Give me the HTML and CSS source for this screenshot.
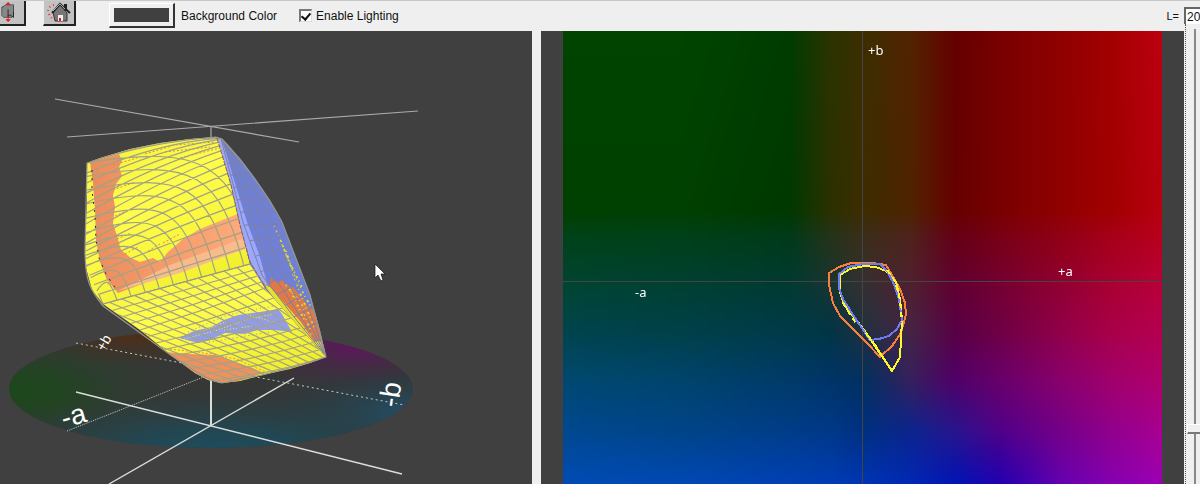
FILE: index.html
```
<!DOCTYPE html>
<html lang="en">
<head>
<meta charset="utf-8">
<title>Gamut Viewer</title>
<link rel="stylesheet" href="styles.css">
</head>
<body>
<div class="app">
  <header class="toolbar">
    <button class="tool tool-first" type="button" aria-label="Reset rotation">
      <svg width="20" height="22" viewBox="0 0 20 22"><path d="M4 5l2-2h9v12l-2 2H4l-2-2V6z" fill="#888" stroke="#555"/><path d="M2 6l2-2M15 4v10" stroke="#444"/><path d="M9 0l3 3H6zM9 22l-3-3h6z" fill="#e11"/><path d="M9 14v6" stroke="#e11"/><path d="M9 8v8l2-2 4 3v-6" fill="none" stroke="#222"/></svg>
    </button>
    <button class="tool" type="button" aria-label="Home view">
      <svg width="24" height="22" viewBox="0 0 24 22"><path d="M17 3h3v7h-3z" fill="#222"/><path d="M6 11l7-7 7 8v8H8z" fill="#777" stroke="#333"/><path d="M5 12l8-9 10 9" fill="none" stroke="#222" stroke-width="2"/><path d="M6 10l7-7 5 5" fill="none" stroke="#aaa"/><path d="M11 14h5v6h-5z" fill="#eee"/><path d="M12 17h2v3h-2z" fill="#e11"/><path d="M7 4C2 5 0 9 2 13s4 5 6 6" fill="none" stroke="#e33" stroke-width="2" stroke-dasharray="1 3"/></svg>
    </button>
    <button class="swatch" type="button" aria-labelledby="bg-label"></button>
    <span class="bg-label" id="bg-label">Background Color</span>
    <label class="lighting"><input class="tick" type="checkbox" checked>Enable Lighting</label>
    <label class="l-label" for="lvalue">L=</label>
    <input class="l-value" id="lvalue" type="text" value="20">
  </header>
  <main class="views">
    <section class="view solid-view" aria-label="3D gamut">
      <svg class="drawing" viewBox="0 31 532 453">
        <defs>
          <radialGradient id="gGreen"><stop offset="0" stop-color="#1c481c"/><stop offset=".3" stop-color="#1f451f" stop-opacity=".9"/><stop offset="1" stop-color="#2c3c2c" stop-opacity="0"/></radialGradient>
          <radialGradient id="gBrown"><stop offset="0" stop-color="#572c14"/><stop offset="1" stop-color="#42301c" stop-opacity="0"/></radialGradient>
          <radialGradient id="gPurple"><stop offset="0" stop-color="#601560"/><stop offset="1" stop-color="#402840" stop-opacity="0"/></radialGradient>
          <radialGradient id="gBlue"><stop offset="0" stop-color="#22506a"/><stop offset="1" stop-color="#223c48" stop-opacity="0"/></radialGradient>
          <radialGradient id="gTeal"><stop offset="0" stop-color="#1e4e60"/><stop offset=".4" stop-color="#204854" stop-opacity=".9"/><stop offset="1" stop-color="#2a4044" stop-opacity="0"/></radialGradient>
          <linearGradient id="gYellow" x1="0" y1="0" x2=".6" y2="1"><stop offset="0" stop-color="#f0ee38"/><stop offset=".45" stop-color="#fffd4c"/><stop offset="1" stop-color="#f0ee2c"/></linearGradient>
          <linearGradient id="gOrange" x1="0" y1="0" x2="1" y2="0"><stop offset="0" stop-color="#ec8c5c"/><stop offset="1" stop-color="#ffac7c"/></linearGradient>
          <clipPath id="disc"><ellipse cx="211" cy="389" rx="202" ry="59"/></clipPath>
          <clipPath id="topFace"><path d="M87 163L100 158 130 149 160 143 190 139 216 137 219 139 231 185 240 225 250 264 103 304 92 290 85 264 85 240 87 200z"/></clipPath>
          <clipPath id="lowFace"><path d="M103 304L250 264 265 288 300 328 326 357 310 363 290 369 262 375 240 381 222 383 208 380 195 373 172 356 140 330z"/></clipPath>
          <clipPath id="sideFace"><path d="M218 138L222 139 240 158 255 178 270 200 282 222 296 258 310 295 320 330 326 357 300 328 265 288 250 264 240 225 231 185z"/></clipPath>
        </defs>

        <g clip-path="url(#disc)">
          <rect x="9" y="330" width="404" height="118" fill="#353837"/>
          <ellipse cx="18" cy="390" rx="150" ry="62" fill="url(#gGreen)"/>
          <ellipse cx="135" cy="330" rx="120" ry="38" fill="url(#gBrown)"/>
          <ellipse cx="355" cy="345" rx="130" ry="46" fill="url(#gPurple)"/>
          <ellipse cx="410" cy="415" rx="150" ry="50" fill="url(#gBlue)"/>
          <ellipse cx="220" cy="454" rx="240" ry="64" fill="url(#gTeal)"/>
        </g>
        <g class="dotted"><path d="M76 343L404 405" stroke-dasharray="2 3"/><path d="M67 431L292 342" stroke-dasharray="1 1"/></g>
        <g class="disc-text">
          <text x="64" y="428" font-size="28" transform="rotate(-16 64 428)">-a</text>
          <text x="398" y="408" font-size="28" transform="rotate(-82 398 408)">-b</text>
          <text x="104" y="352" font-size="14" transform="rotate(-60 104 352)">+b</text>
        </g>
        <g class="axes far"><path d="M55 99L299 142M67 137L418 111"/><path d="M211 126V140"/></g>
        <g class="axes"><path d="M76 392L402 474M109 484L294 378"/><path d="M211 380V426" stroke-width="2"/></g>

        <g clip-path="url(#topFace)">
          <rect x="80" y="130" width="180" height="180" fill="url(#gYellow)"/>
          <path fill="url(#gOrange)" d="M90 162L119 154 122 161 119 167 122 176 116 184 113 195 115 207 113 223 117 236 121 250 131 258 140 262 153 258 160 262 168 252 183 239 200 229 220 221 240 213 250 244 118 293 107 280 100 262 96 240 95 210 93 184z"/>
          <path fill="#f8bc8c" d="M118 291L170 265 244 238 250 247 180 273z"/>
          <g class="flecks"><path d="M113 165l24-7M113 190l22-8M115 216l18-8M117 239l14-6M145 154l30-9 40-3M165 152l45-5M180 158l40-10M125 254l13-7M148 251l12-7M163 243l17-9"/></g>
          <g class="grid" id="topGrid"></g>
          <path d="M92 170V190L95 216 96 240 99 258 106 274 118 292" fill="none" stroke="#28282c" stroke-dasharray="2 6"/>
        </g>
        <g clip-path="url(#lowFace)">
          <rect x="95" y="260" width="235" height="125" fill="url(#gYellow)"/>
          <path fill="#929ce8" d="M179 338L194 331 211 327 224 320 238 315 260 312 278 309 282 314 292 332 275 330 258 330 245 334 225 333 210 340 198 343z"/>
          <path fill="none" stroke="#f6f436" stroke-dasharray="1 2" d="M184 339L218 330 250 318 276 314M195 334L228 321M224 330L252 326M247 315L275 322"/>
          <path fill="none" stroke="#8590e0" stroke-dasharray="1 3" d="M188 332L225 316 245 311 275 306M205 343L240 337 270 332"/>
          <path fill="#f0905c" d="M165 352L190 354 215 355 232 361 250 367 264 373 222 386 200 382z"/>
          <path fill="none" stroke="#ec8c50" stroke-dasharray="2 2" d="M170 349L212 354 236 359 268 373"/>
          <g class="grid" id="lowGrid"></g>
        </g>
        <g clip-path="url(#sideFace)">
          <rect x="215" y="135" width="115" height="225" fill="#7080d4"/>
          <path fill="#9ca8fc" d="M218 138L222 139 234 180 247 222 259 254 268 286 260 282 248 257 238 222z"/>
          <path fill="#e07848" d="M255 265L269 287 271 278 278 283 282 280 287 286 293 287 300 296 308 306 316 312 326 357 295 325z"/>
          <path fill="#e4e22c" d="M264 285L270 287 300 321 314 341 326 342V360L300 332z"/>
          <path fill="none" stroke="#e0e030" stroke-width="2" stroke-dasharray="1 4 2 3" d="M274 226L288 259 302 288M281 241L295 279 311 307M286 251L300 293 315 329M286 285L301 303 312 336M291 291L305 322"/>
          <g class="grid" id="sideGrid"></g>
        </g>
        <path class="outline" d="M87 163Q145 143 216 137L222 139C240 158 267 193 282 222L310 295 326 357Q310 363 262 375L222 383Q208 381 172 356L103 306C90 290 85 280 85 250L87 163M103 304L250 264"/>
        <path fill="none" stroke="#8c5c50" d="M217 138L231 185 240 225 250 262 266 288" stroke-dasharray="5 1"/>
        <path d="M375 264v14l3-3 3 6 2-1-2-6h4z" fill="#fff" stroke="#111" stroke-width=".7"/>
      </svg>
    </section>
    <section class="view plane-view" aria-label="a-b plane">
      <canvas class="field" id="field" width="599" height="453"></canvas>
      <svg class="drawing" viewBox="563 31 599 453">
        <g fill="none" shape-rendering="crispEdges">
          <path stroke="#444" d="M862.500 31V484M563 281.500H1162"/>
          <g stroke-width="2">
            <path stroke="#f8803c" d="M829 273L839 267 851 263H872L886 265 892 275 900 289 905 303 906 314 901 333 892 346 880 357 867 343 840 316 833 303 829 285z"/>
            <path stroke="#fcf82c" d="M840 275L850 269 864 266 876 267 886 271 896 282 900 299 902 320 900 357 892 371 875 345 858 322 844 305 840 292z"/>
            <path stroke="#6c7cf0" d="M839 274L848 267 863 264H880L887 271 893 282 899 299 902 320 897 329 889 336 879 339 870 340 857 321 843 299 839 288z"/>
            <path stroke="#fcf82c" stroke-dasharray="5 4" d="M887 270L895 281 900 300 902 322M843 303L857 325"/>
            <path stroke="#fcf82c" d="M866 333L892 371"/>
          </g>
        </g>
        <g class="plane-text"><text x="868" y="55">+b</text><text x="1058" y="276">+a</text><text x="635" y="297">-a</text></g>
      </svg>
    </section>
    <aside class="slider-pane">
      <input class="slider" type="range" min="10" max="100" value="20" aria-label="Lightness">
    </aside>
  </main>
</div>
<script src="view.js"></script>
</body>
</html>
```
FILE: styles.css
```
* { box-sizing: border-box; }
body { margin: 0; background: #efefef; font: 12px/16px "Liberation Sans", Arial, sans-serif; color: #111; }
.app { display: flex; flex-direction: column; height: 100vh; overflow: hidden; }
.toolbar { display: flex; align-items: flex-start; height: 31px; flex: none; border-top: 1px solid #c8c8c8; }
.tool { width: 33px; height: 25px; flex: none; margin: 0 17px 0 0; padding: 0 0 2px; display: flex; align-items: center; justify-content: center; background: #c2c2c2; border: solid; border-width: 0 2px 2px 1px; border-color: #fff #222 #222 #eee; border-radius: 0; }
.tool-first { width: 26px; padding-right: 6px; border-left: 0; }
.swatch { width: 66px; height: 25px; flex: none; margin: 2px 0 0 16px; padding: 4px; border: solid; border-width: 1px 2px 2px 1px; border-color: #fff #333 #333 #fff; border-radius: 0; background: #404040 content-box; }
.bg-label { margin: 7px 0 0 6px; white-space: nowrap; }
.lighting { display: flex; gap: 4px; margin: 7px auto 0 22px; white-space: nowrap; }
.tick { appearance: none; width: 13px; height: 13px; margin: 1px 0 0; background: #fff; border: solid; border-width: 2px 1px 1px 2px; border-color: #777 #ddd #ddd #777; display: grid; place-items: center; }
.tick:checked::before { content: ""; width: 4px; height: 7px; margin-bottom: 2px; border: solid #111; border-width: 0 2px 2px 0; transform: rotate(40deg); }
.l-label { margin: 7px 5px 0 0; font-size: 11px; }
.l-value { width: 16px; height: 17px; flex: none; margin: 6px 0 0; padding: 0 0 0 1px; border: solid #666; border-width: 2px 0 0 2px; border-radius: 0; background: #fff; font: 12px/14px "Liberation Sans", Arial, sans-serif; color: #111; }
.views { flex: 1; min-height: 0; display: grid; grid-template-columns: 532fr 652fr 16px; }
.view { min-width: 0; min-height: 0; background: #404040; display: grid; overflow: hidden; }
.plane-view { margin-left: 9px; padding: 0 22px; }
.drawing, .field { grid-area: 1 / 1; width: 100%; height: 100%; min-height: 0; display: block; }
.slider-pane { margin: -7px 0 0 1px; min-height: 0; overflow: hidden; border-left: 1px dotted #555; }
.slider { appearance: none; writing-mode: vertical-lr; direction: rtl; display: block; width: 20px; height: 100%; margin: 0 0 0 1px; background: linear-gradient(#888, #888) 7px 5px / 2px 100% no-repeat; }
.slider::-webkit-slider-thumb { appearance: none; width: 20px; height: 10px; background: #f0f0f0; border: solid; border-width: 1px 1px 2px; border-color: #fff #777 #777 #fff; }
.dotted { fill: none; stroke: #c8c8c8; }
.axes { fill: none; stroke: #dcdcdc; stroke-width: 1.4; }
.far { stroke: #aaa; stroke-width: 1.2; }
.disc-text { fill: #fff; font-family: "Liberation Sans", Arial, sans-serif; }
.plane-text { fill: #fff; font: 13px "Noto Sans", sans-serif; }
.grid { fill: none; stroke: #a2a284; stroke-width: 1.2; }
#sideGrid { stroke: #7c80a8; stroke-width: 1; }
.flecks { fill: none; stroke: #e08840; stroke-dasharray: 2 2; }
.outline { fill: none; stroke: #97978a; stroke-width: 1.2; }
```
FILE: view.js
```
// Colour plane: colours at grid nodes, blended between them.
const xs = [563, 680, 790, 830, 862, 910, 955, 1000, 1060, 1110, 1162];
const ys = [31, 210, 235, 281, 330, 380, 430, 484];
const table = [
  "004400 004400 003c00 2b3300 3b2e00 512300 640000 780000 900000 a20000 bc0010",
  "004000 004000 003800 2b3000 3c2d00 4f2300 660000 780000 900000 a00000 b80010",
  "004218 004018 003a18 243318 3a2d18 4e221c 640014 780014 900014 a50018 b8001c",
  "004430 004030 003a30 1a3430 343030 50202e 600030 740030 900030 a80030 b80038",
  "00444c 004048 003a48 003444 203040 452444 580044 6e0044 900048 a80048 b40050",
  "004870 00446c 003a68 003468 003060 35205c 500068 68006c 88006c a0006c b0006c",
  "004890 004488 003c88 003888 003080 0c248c 28148c 500088 740088 90008c a80090",
  "004cb4 0048b4 0040b4 003cb4 0034b4 0028b4 0014b4 2000b0 6400b0 8400b0 9c00b4"
].map(row => row.split(" ").map(h => [0, 2, 4].map(i => parseInt(h.substr(i, 2), 16))));

const canvas = document.getElementById("field");
const ctx = canvas.getContext("2d");
const img = ctx.createImageData(canvas.width, canvas.height);
const locate = (list, v) => {
  let i = 0;
  while (i < list.length - 2 && v > list[i + 1]) i++;
  return [i, (v - list[i]) / (list[i + 1] - list[i])];
};
for (let y = 0, p = 0; y < canvas.height; y++) {
  const [j, v] = locate(ys, y + 31);
  for (let x = 0; x < canvas.width; x++) {
    const [i, u] = locate(xs, x + 563);
    for (let c = 0; c < 3; c++) {
      img.data[p++] = (table[j][i][c] * (1 - u) + table[j][i + 1][c] * u) * (1 - v)
        + (table[j + 1][i][c] * (1 - u) + table[j + 1][i + 1][c] * u) * v;
    }
    img.data[p++] = 255;
  }
}
ctx.putImageData(img, 0, 0);

// Surface grids of the solid.
const mix = (a, b, t) => [a[0] + (b[0] - a[0]) * t, a[1] + (b[1] - a[1]) * t];
const along = (pts, t) => {
  const s = Math.min(t, 0.9999) * (pts.length - 1), i = Math.floor(s);
  return mix(pts[i], pts[i + 1], s - i);
};
const put = (id, lines) => {
  const path = document.createElementNS("http://www.w3.org/2000/svg", "path");
  path.setAttribute("d", lines.join(""));
  document.getElementById(id).append(path);
};
const left = [[87, 163], [87, 200], [85, 240], [86, 268], [103, 304]];
const seam = [[218, 138], [231, 185], [240, 225], [250, 264]];
const lines = [];
for (let k = 0; k <= 11; k++) {
  const t = k / 11;
  const a = along(left, t);
  const c = mix([226, 140], [96, 288], t);
  const e = mix([258, 262], [103, 304], t);
  lines.push(`M${a}C${mix(a, c, 0.85)} ${mix(c, e, 0.2)} ${e}`);
}
for (let k = 0; k <= 15; k++) {
  const t = k / 15;
  const a = along(left, t), b = along(seam, t ** 2.2), m = mix(a, b, 0.55);
  lines.push(`M${a}Q${[m[0], m[1] - 12 * (1 - t)]} ${b}`);
}
put("topGrid", lines);

const low = [];
const lowLeft = [[103, 304], [140, 330], [172, 356], [208, 381]];
const lowRight = [[250, 264], [265, 288], [300, 328], [326, 357]];
for (let k = 0; k <= 12; k++) {
  const t = k / 12;
  const a = along(lowLeft, t), b = along(lowRight, t), m = mix(a, b, 0.5);
  low.push(`M${a}Q${[m[0], m[1] + 6 * t]} ${b}`);
}
for (let k = 0; k <= 17; k++) {
  const t = k / 17;
  const s = mix([250, 264], [20, 318], t), d = mix([84, 96], [210, 74], Math.sqrt(t));
  low.push(`M${s}L${[s[0] + d[0], s[1] + d[1]]}`);
}
put("lowGrid", low);

const side = [];
const inner = [[221, 139], [232, 180], [243, 222], [262, 275], [290, 312], [324, 354]];
const outer = [[223, 139], [255, 178], [282, 222], [296, 258], [312, 300], [326, 355]];
for (let k = 0; k <= 4; k++) {
  side.push("M" + inner.map((p, i) => mix(p, outer[i], k / 4)).join("L"));
}
for (let k = 1; k < 17; k++) {
  const a = along(inner, k / 17), b = along(outer, k / 17);
  side.push(`M${a}L${b}`);
}
put("sideGrid", side);
```
